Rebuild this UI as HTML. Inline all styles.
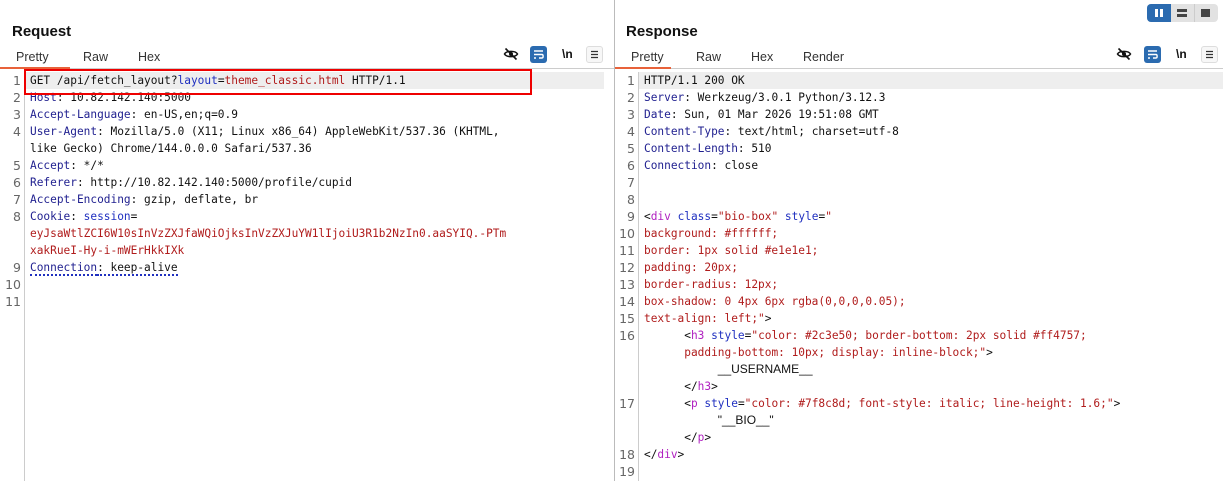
<!DOCTYPE html>
<html><head><meta charset="utf-8"><style>
*{margin:0;padding:0;box-sizing:border-box}
body{width:1223px;height:481px;background:#fff;position:relative;overflow:hidden;font-family:"Liberation Sans",sans-serif;color:#111}
.panel{position:absolute;top:0;height:481px}
.h{position:absolute;top:23px;font-weight:bold;font-size:15px}
.tabs{position:absolute;top:50px;font-size:12.5px;color:#333}
.tabs span{position:absolute;white-space:nowrap}
.tline{position:absolute;top:68px;height:1px;background:#ccc}
.oline{position:absolute;top:67px;height:2px;background:#e8623a}
.code{position:absolute;top:72px;font-family:"DejaVu Sans Mono","Liberation Mono",monospace;font-size:11.15px;line-height:17px;white-space:pre}
.gut{position:absolute;top:72px;bottom:0;border-right:1px solid #ccc}
.num{position:absolute;font-family:"DejaVu Sans",sans-serif;font-size:12.5px;color:#666;text-align:right;line-height:17px;white-space:pre}
.k{color:#1f1f8f}.r{color:#b01c1c}.b{color:#2030c0}.p{color:#b020c0}
.ico{position:absolute;top:46px}
.sn{font-family:'Liberation Sans',sans-serif;font-size:12px}
</style></head><body>
<div class="panel" style="left:0;width:614px">
<div class="h" style="left:12px">Request</div>
<div class="tabs"><span style="left:16px">Pretty</span><span style="left:83px">Raw</span><span style="left:138px">Hex</span></div>
<div class="tline" style="left:0;width:614px"></div>
<div class="oline" style="left:0;width:70px"></div>
<div style="position:absolute;left:25px;top:72px;width:579px;height:17px;background:#eee"></div>
<div class="gut" style="left:0;width:25px"></div>
<div class="num" style="left:0;width:21px;top:72px">1
2
3
4

5
6
7
8


9
10
11</div>
<div class="code" style="left:30px">GET /api/fetch_layout?<span class="b">layout</span>=<span class="r">theme_classic.html</span> HTTP/1.1
<span class="k">Host</span>: 10.82.142.140:5000
<span class="k">Accept-Language</span>: en-US,en;q=0.9
<span class="k">User-Agent</span>: Mozilla/5.0 (X11; Linux x86_64) AppleWebKit/537.36 (KHTML,
like Gecko) Chrome/144.0.0.0 Safari/537.36
<span class="k">Accept</span>: */*
<span class="k">Referer</span>: http://10.82.142.140:5000/profile/cupid
<span class="k">Accept-Encoding</span>: gzip, deflate, br
<span class="k">Cookie</span>: <span class="b">session</span>=
<span class="r">eyJsaWtlZCI6W10sInVzZXJfaWQiOjksInVzZXJuYW1lIjoiU3R1b2NzIn0.aaSYIQ.-PTm</span>
<span class="r">xakRueI-Hy-i-mWErHkkIXk</span>
<span class="k" style="border-bottom:2px dotted #2030c0">Connection</span><span style="border-bottom:2px dotted #2030c0">: keep-alive</span>
</div>
<div style="position:absolute;left:24px;top:69px;width:508px;height:26px;border:2px solid #e00"></div>
<svg class="ico" style="left:503px" width="16" height="16" viewBox="0 0 16 16"><path d="M1.5 8C3.5 4.5 12.5 4.5 14.5 8C12.5 11.5 3.5 11.5 1.5 8Z" fill="none" stroke="#111" stroke-width="1.5"/><circle cx="8" cy="8" r="2" fill="#111"/><path d="M2.5 2.5L13.5 13.5" stroke="#111" stroke-width="1.6"/></svg>
<div style="position:absolute;left:530px;top:46px;width:17px;height:17px;background:#2b6bb0;border-radius:3px"><svg width="17" height="17" viewBox="0 0 17 17"><path d="M4 5H13M4 8.5H12C13.5 8.5 13.5 12 12 12H9M4 12H6" fill="none" stroke="#fff" stroke-width="1.4"/></svg></div>
<div style="position:absolute;left:562px;top:47px;font-size:12px;font-weight:bold">\n</div>
<div style="position:absolute;left:586px;top:46px;width:17px;height:17px;border:1px solid #ddd;border-radius:3px;background:#f7f7f7"><svg width="15" height="15" viewBox="0 0 15 15"><path d="M4 4.5H11M4 7.5H11M4 10.5H11" stroke="#333" stroke-width="1.3"/></svg></div>
</div>
<div style="position:absolute;left:614px;top:0;width:1px;height:481px;background:#bbb"></div>
<div class="panel" style="left:615px;width:608px">
<div class="h" style="left:11px">Response</div>
<div class="tabs"><span style="left:16px">Pretty</span><span style="left:81px">Raw</span><span style="left:136px">Hex</span><span style="left:188px">Render</span></div>
<div class="tline" style="left:0;width:608px"></div>
<div class="oline" style="left:0;width:56px"></div>
<div style="position:absolute;left:24px;top:72px;width:584px;height:17px;background:#eee"></div>
<div class="gut" style="left:0;width:24px"></div>
<div class="num" style="left:0;width:20px;top:72px">1
2
3
4
5
6
7
8
9
10
11
12
13
14
15
16



17


18
19</div>
<div class="code" style="left:29px">HTTP/1.1 200 OK
<span class="k">Server</span>: Werkzeug/3.0.1 Python/3.12.3
<span class="k">Date</span>: Sun, 01 Mar 2026 19:51:08 GMT
<span class="k">Content-Type</span>: text/html; charset=utf-8
<span class="k">Content-Length</span>: 510
<span class="k">Connection</span>: close


&lt;<span class="p">div</span> <span class="b">class</span>=<span class="r">"bio-box"</span> <span class="b">style</span>=<span class="r">"</span>
<span class="r">background: #ffffff;</span>
<span class="r">border: 1px solid #e1e1e1;</span>
<span class="r">padding: 20px;</span>
<span class="r">border-radius: 12px;</span>
<span class="r">box-shadow: 0 4px 6px rgba(0,0,0,0.05);</span>
<span class="r">text-align: left;"</span>&gt;
      &lt;<span class="p">h3</span> <span class="b">style</span>=<span class="r">"color: #2c3e50; border-bottom: 2px solid #ff4757;</span>
      <span class="r">padding-bottom: 10px; display: inline-block;"</span>&gt;
           <span class="sn">__USERNAME__</span>
      &lt;/<span class="p">h3</span>&gt;
      &lt;<span class="p">p</span> <span class="b">style</span>=<span class="r">"color: #7f8c8d; font-style: italic; line-height: 1.6;"</span>&gt;
           <span class="sn">"__BIO__"</span>
      &lt;/<span class="p">p</span>&gt;
&lt;/<span class="p">div</span>&gt;
</div>
<svg class="ico" style="left:501px" width="16" height="16" viewBox="0 0 16 16"><path d="M1.5 8C3.5 4.5 12.5 4.5 14.5 8C12.5 11.5 3.5 11.5 1.5 8Z" fill="none" stroke="#111" stroke-width="1.5"/><circle cx="8" cy="8" r="2" fill="#111"/><path d="M2.5 2.5L13.5 13.5" stroke="#111" stroke-width="1.6"/></svg>
<div style="position:absolute;left:529px;top:46px;width:17px;height:17px;background:#2b6bb0;border-radius:3px"><svg width="17" height="17" viewBox="0 0 17 17"><path d="M4 5H13M4 8.5H12C13.5 8.5 13.5 12 12 12H9M4 12H6" fill="none" stroke="#fff" stroke-width="1.4"/></svg></div>
<div style="position:absolute;left:561px;top:47px;font-size:12px;font-weight:bold">\n</div>
<div style="position:absolute;left:586px;top:46px;width:17px;height:17px;border:1px solid #ddd;border-radius:3px;background:#f7f7f7"><svg width="15" height="15" viewBox="0 0 15 15"><path d="M4 4.5H11M4 7.5H11M4 10.5H11" stroke="#333" stroke-width="1.3"/></svg></div>
</div>
<div style="position:absolute;left:1147px;top:4px;width:71px;height:18px;border-radius:4px;background:#e2e2e2;overflow:hidden">
<div style="position:absolute;left:0;top:0;width:24px;height:18px;background:#2b6bb0"></div>
<div style="position:absolute;left:8px;top:5px;width:3px;height:8px;background:#fff"></div>
<div style="position:absolute;left:13px;top:5px;width:3px;height:8px;background:#fff"></div>
<div style="position:absolute;left:47px;top:0;width:1px;height:18px;background:#ccc"></div>
<div style="position:absolute;left:30px;top:5px;width:10px;height:3px;background:#444"></div>
<div style="position:absolute;left:30px;top:10px;width:10px;height:3px;background:#444"></div>
<div style="position:absolute;left:54px;top:5px;width:9px;height:8px;background:#444"></div>
</div>
</body></html>
